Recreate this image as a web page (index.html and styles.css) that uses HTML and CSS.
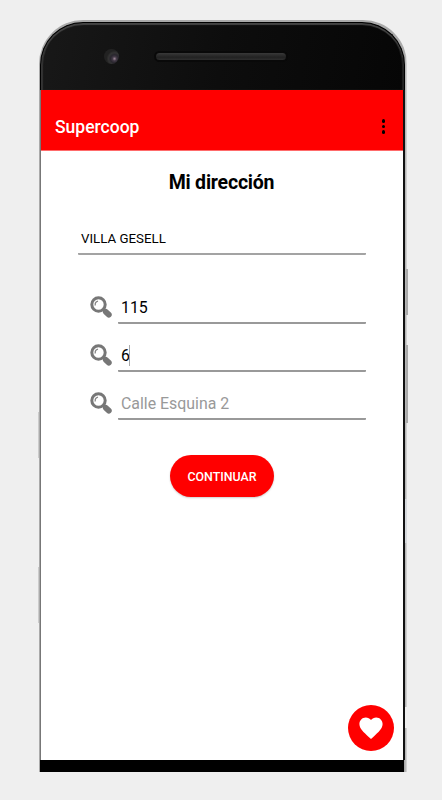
FILE: index.html
```html
<!DOCTYPE html>
<html lang="es">
<head>
    <meta charset="UTF-8">
    <meta name="viewport" content="width=device-width, initial-scale=1.0">
    <title>Supercoop</title>
    <link rel="stylesheet" href="styles.css">
</head>
<body>
    <svg class="symbols" width="0" height="0">
        <symbol id="lupa" viewBox="0 0 22 22">
            <path d="M13 13l3 3" stroke="#777" stroke-width="3.4"/>
            <path d="M15.800 15.800l3 2.900" stroke="#777" stroke-width="5.800" stroke-linecap="round"/>
            <circle cx="8.500" cy="8.500" r="6.700" fill="#fff" stroke="#777" stroke-width="3"/>
            <path d="M5.300 9.500a3.800 3.800 0 0 1 2.700-4.400" fill="none" stroke="#888" stroke-width="1.300"/>
        </symbol>
    </svg>

    <div class="phone">
        <div class="bezel">
            <span class="camera"></span>
            <span class="speaker"></span>
        </div>

        <div class="screen">
            <header class="toolbar">
                <h1>Supercoop</h1>
                <div class="menu"><i></i><i></i><i></i></div>
            </header>

            <main class="content">
                <h2>Mi dirección</h2>
                <div class="city">VILLA GESELL</div>

                <div class="field">
                    <svg class="icon"><use href="#lupa"/></svg>
                    <div class="input">115</div>
                </div>
                <div class="field">
                    <svg class="icon"><use href="#lupa"/></svg>
                    <div class="input">6<span class="cursor"></span></div>
                </div>
                <div class="field">
                    <svg class="icon"><use href="#lupa"/></svg>
                    <div class="input placeholder">Calle Esquina 2</div>
                </div>

                <button type="button">CONTINUAR</button>
            </main>

            <div class="fab">
                <svg width="24" height="22" viewBox="0 0 24 22">
                    <path fill="#fff" d="M12 22l-1.700-1.500C4.200 15 .4 11.500.4 7.100.4 3.400 3.200.5 6.800.5c2 0 4 1 5.200 2.500C13.200 1.500 15.200.5 17.200.5c3.600 0 6.400 2.900 6.400 6.600 0 4.400-3.800 7.900-9.900 13.400z"/>
                </svg>
            </div>
        </div>

        <div class="bottom"></div>

        <!-- side buttons -->
        <span class="key power"></span>
        <span class="key volume"></span>
        <span class="key seam"></span>
        <span class="key seam low"></span>
        <span class="key left"></span>
        <span class="key left low"></span>
    </div>
</body>
</html>
```

FILE: styles.css
```css
* {
    box-sizing: border-box;
}

body {
    margin: 0;
    height: 800px;
    overflow: hidden;
    background-color: #efefef;
    font-family: Roboto, sans-serif;
    color: #000;
}

.symbols {
    display: none;
}

.phone {
    position: relative;
    width: 368px;
    height: 752px;
    margin: 20px 0 0 39px;
    padding: 2px 2px 0 1px;
    border-radius: 44px 44px 0 0;
    background: linear-gradient(to right, #aaa 0, #aaa 366px, #ddd 368px);
}

.bezel {
    display: flex;
    align-items: center;
    height: 68px;
    padding-left: 63px;
    border: 1px solid #000;
    border-bottom: 0;
    border-radius: 43px 43px 0 0;
    background: linear-gradient(100deg, #181818, #0d0d0d 50%, #060606);
    box-shadow: inset 0 2px 1px #444, inset 2px 0 1px #333, inset -2px 0 1px #222;
}

.camera {
    width: 15px;
    height: 15px;
    border-radius: 50%;
    background: radial-gradient(circle at 70% 65%, #a08a9a 0, #453b48 2px, #29262e 4px, #333 6px, #222 8px);
}

.speaker {
    width: 134px;
    height: 11px;
    margin-left: 35px;
    border: 2px solid #090909;
    border-radius: 6px;
    background: linear-gradient(#393939, #222 60%, #2e2e2e);
}

.screen {
    position: relative;
    height: 670px;
    border-left: 1px solid #777;
    border-right: 2px solid #111;
    background-color: #fff;
}

.toolbar {
    display: flex;
    align-items: center;
    justify-content: space-between;
    height: 61px;
    padding: 13px 18px 0 14px;
    background-color: #f00;
    border-bottom: 1px solid #ff6b6b;
}

.toolbar h1 {
    margin: 0;
    color: #fff;
    font-size: 17.5px;
    font-weight: 500;
    line-height: 20px;
}

.menu {
    display: flex;
    flex-direction: column;
    gap: 2px;
}

.menu i {
    width: 3.5px;
    height: 3.5px;
    border-radius: 50%;
    background-color: #000;
}

.content {
    padding: 18px 37px 0;
}

.content h2 {
    margin: 0 0 32px;
    padding-right: 1px;
    font-size: 19.5px;
    font-weight: 700;
    letter-spacing: -0.2px;
    line-height: 27px;
    height: 26px;
    text-align: center;
}

.city {
    height: 28px;
    margin-bottom: 27px;
    padding-left: 3px;
    border-bottom: 2px solid #a3a3a3;
    border-radius: 1px;
    font-size: 13.3px;
    line-height: 23px;
}

.field {
    display: flex;
    height: 48px;
    padding-left: 12px;
}

.icon {
    width: 22px;
    height: 22px;
    margin-top: 14px;
}

.input {
    flex: 1;
    display: flex;
    height: 42px;
    margin-left: 6px;
    padding: 11px 0 0 3px;
    border-bottom: 2px solid #999;
    border-radius: 1px;
    font-size: 15.9px;
    line-height: 30px;
}

.placeholder {
    color: #999;
}

.cursor {
    width: 1px;
    height: 21px;
    margin-top: 4px;
    margin-left: -1px;
    background-color: #aaa;
}

button {
    display: block;
    width: 104px;
    height: 42px;
    margin: 29px auto 0;
    padding: 0;
    border: 0;
    border-radius: 21px;
    background-color: #f00;
    box-shadow: 0 1px 2px rgba(0, 0, 0, 0.2);
    color: #fff;
    font-family: inherit;
    font-size: 12.4px;
    font-weight: 500;
}

/* floating button, stays over the page content */
.fab {
    position: absolute;
    right: 9px;
    bottom: 9px;
    display: flex;
    align-items: center;
    justify-content: center;
    width: 46px;
    height: 46px;
    border-radius: 50%;
    background-color: #f00;
}

.bottom {
    height: 12px;
    margin-right: 1px;
    background-color: #000;
}

.key {
    position: absolute;
    top: 249px;
    left: 367px;
    width: 2px;
    height: 46px;
    background-color: #aaa;
}

.volume {
    top: 325px;
    height: 78px;
}

.seam {
    top: 479px;
    left: 366px;
    height: 44px;
    background-color: #d5d8dc;
}

.seam.low {
    top: 687px;
    height: 21px;
    background-color: #efefef;
}

.left {
    top: 392px;
    left: -1px;
    width: 1px;
    background-color: #ccc;
}

.left.low {
    top: 547px;
    height: 56px;
}
```
